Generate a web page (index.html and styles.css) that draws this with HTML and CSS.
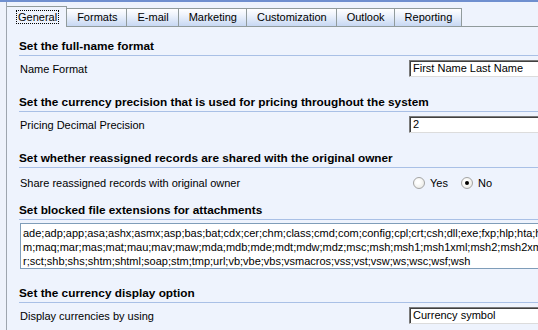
FILE: index.html
```html
<!DOCTYPE html>
<html lang="en">
<head>
    <meta charset="UTF-8">
    <title>System Settings</title>
    <link rel="stylesheet" href="styles.css">
</head>
<body>
    <div class="frame">
        <div class="panel">
            <div class="tabs">
                <div class="tab tab-active"><span class="tab-focus">General</span></div>
                <div class="tab">Formats</div>
                <div class="tab">E-mail</div>
                <div class="tab">Marketing</div>
                <div class="tab">Customization</div>
                <div class="tab">Outlook</div>
                <div class="tab">Reporting</div>
                <div class="tab-fill"></div>
            </div>

            <div class="content">
                <div class="section">
                    <div class="section-title">Set the full-name format</div>
                    <div class="field-row">
                        <div class="field-label">Name Format</div>
                        <div class="field-box">First Name Last Name</div>
                    </div>
                </div>

                <div class="section">
                    <div class="section-title">Set the currency precision that is used for pricing throughout the system</div>
                    <div class="field-row">
                        <div class="field-label">Pricing Decimal Precision</div>
                        <div class="field-box">2</div>
                    </div>
                </div>

                <div class="section">
                    <div class="section-title">Set whether reassigned records are shared with the original owner</div>
                    <div class="field-row choice-row">
                        <div class="field-label">Share reassigned records with original owner</div>
                        <div class="choices">
                            <span class="radio"></span><span class="choice-text">Yes</span>
                            <span class="radio radio-on"></span><span class="choice-text">No</span>
                        </div>
                    </div>
                </div>

                <div class="section section-blocked">
                    <div class="section-title">Set blocked file extensions for attachments</div>
                    <div class="text-area">
                        <div>ade;adp;app;asa;ashx;asmx;asp;bas;bat;cdx;cer;chm;class;cmd;com;config;cpl;crt;csh;dll;exe;fxp;hlp;hta;htr;htw;ida;idc;idq;ins;isp;its;jse;ksh;lnk;mad;maf;mag;ma</div>
                        <div>m;maq;mar;mas;mat;mau;mav;maw;mda;mdb;mde;mdt;mdw;mdz;msc;msh;msh1;msh1xml;msh2;msh2xml;mshxml;msi;msp;mst;ops;pcd;pif;prf;prg;printer;pst;reg;rem;scf;sc</div>
                        <div>r;sct;shb;shs;shtm;shtml;soap;stm;tmp;url;vb;vbe;vbs;vsmacros;vss;vst;vsw;ws;wsc;wsf;wsh</div>
                    </div>
                </div>

                <div class="section section-display">
                    <div class="section-title">Set the currency display option</div>
                    <div class="field-row">
                        <div class="field-label">Display currencies by using</div>
                        <div class="field-box">Currency symbol</div>
                    </div>
                </div>
            </div>
        </div>
    </div>
</body>
</html>
```

FILE: styles.css
```css
* {
    margin: 0;
    padding: 0;
    box-sizing: border-box;
}

body {
    font-family: 'Liberation Sans', Arial, sans-serif;
    font-size: 11px;
    color: #000;
    background: #eef2fb;
    overflow: hidden;
    width: 538px;
    height: 330px;
}

.frame {
    border-top: 2px solid #6f8fcf;
    padding-left: 6px;
    height: 100%;
}

.panel {
    border-left: 1px solid #9ea5ae;
    background: #eef3fd;
    height: 100%;
    width: 760px;
}

/* tab strip */
.tabs {
    display: flex;
    align-items: flex-end;
    padding-top: 4px;
}

.tab {
    height: 19px;
    line-height: 17px;
    padding: 0 9px 0 10px;
    border: 1px solid #919b9c;
    border-left: none;
    background: linear-gradient(to bottom, #ffffff 0%, #eef3fc 35%, #c7d8f3 100%);
    white-space: nowrap;
}

.tab-active {
    height: 21px;
    line-height: 21px;
    border-bottom: none;
    background: #eef3fd;
    padding: 0 8px 0 10px;
}

.tab-focus {
    outline: 1px dotted #000;
    outline-offset: 0;
    padding: 0 1px;
}

.tab-fill {
    flex: 1;
    border-bottom: 1px solid #919b9c;
}

/* form */
.content {
    padding-left: 12px;
}

.section {
    margin-top: 18px;
}

.section:first-child {
    margin-top: 12px;
}

.section-blocked {
    margin-top: 12px;
}

.section-display {
    margin-top: 17px;
}

.section-title {
    font-size: 11.8px;
    font-weight: bold;
    line-height: 14px;
    padding-bottom: 2px;
    border-bottom: 1px solid #a9c0e6;
    white-space: nowrap;
}

.field-row {
    display: flex;
    align-items: center;
    height: 17px;
    margin-top: 4px;
}

.choice-row {
    margin-top: 6px;
}

.field-label {
    flex: 0 0 390px;
    padding-left: 1px;
}

.field-box {
    flex: 0 0 220px;
    height: 17px;
    line-height: 15px;
    padding-left: 3px;
    background: #fff;
    border: 1px solid #7a7a7a;
    border-right-color: #dcdcdc;
    border-bottom-color: #dcdcdc;
    box-shadow: inset 1px 1px 0 #404040;
}

.choices {
    display: flex;
    align-items: center;
    padding-left: 4px;
}

.radio {
    width: 12px;
    height: 12px;
    border-radius: 50%;
    border: 1px solid #a4a4a4;
    background: radial-gradient(circle at 40% 40%, #ffffff 20%, #e3e3dd 100%);
    display: flex;
    align-items: center;
    justify-content: center;
}

.radio-on::after {
    content: "";
    width: 4px;
    height: 4px;
    border-radius: 50%;
    background: #000;
}

.choice-text {
    margin: 0 13px 0 5px;
}

.text-area {
    margin-top: 3px;
    margin-left: 1px;
    height: 46px;
    padding: 2px 0 0 2px;
    background: #fff;
    border: 1px solid #7f9db9;
    line-height: 14px;
    white-space: nowrap;
    overflow: hidden;
}
```
